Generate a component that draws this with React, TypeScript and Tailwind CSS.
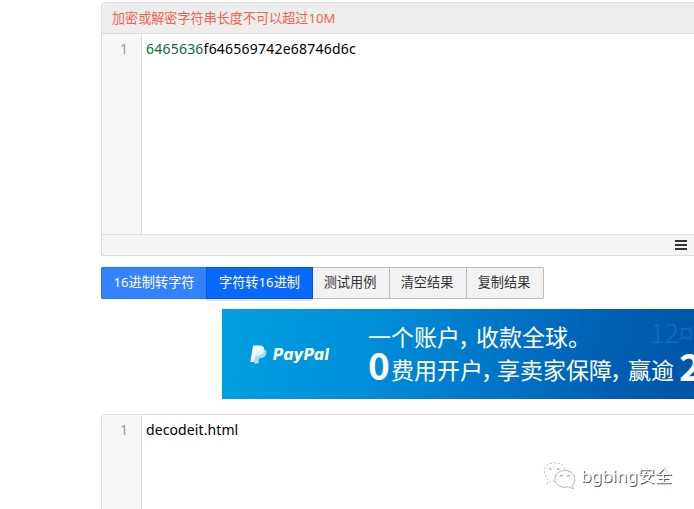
import type { ReactNode } from 'react';

const ui = "font-['Noto_Sans','Noto_Sans_CJK_SC',sans-serif]";
const cjk = "font-['Noto_Sans_CJK_SC',sans-serif]";

function Editor({ children, className }: { children: ReactNode; className: string }) {
  return (
    <div className={`flex bg-white ${className}`}>
      <div className="w-[40px] shrink-0 border-r border-[#ddd] bg-[#f7f7f7] pr-[13px] pt-[5px] text-right text-[14px] leading-[20px] text-[#999]">
        1
      </div>
      <div className="whitespace-nowrap pl-[4px] pt-[5px] text-[14px] leading-[20px] text-black">{children}</div>
    </div>
  );
}

function PlainButton({ children, className = '' }: { children: ReactNode; className?: string }) {
  return (
    <button className={`h-[32px] w-[77px] border-y border-r border-[#bcbcbc] bg-[#f2f2f2] pr-[2px] text-[13.2px] text-[#333] ${className}`}>
      {children}
    </button>
  );
}

function PayPalMark() {
  return (
    <svg className="h-[19px] w-[17px] shrink-0" viewBox="0 0 17 19">
      <path d="M6.2 4.2h7.2c2.7 0 3.5 2 2.9 4.4-.7 3.2-2.7 4.6-5.7 4.6H9.2l-.9 5.3H3.9z" fill="#a6dcf6" />
      <path d="M3.1.5h6.6c3.5 0 4.8 1.9 4.2 4.8-.7 3.4-3 5.1-6.4 5.1H5.3l-1.2 6.6H.3z" fill="#fff" />
      <path d="M6.4 4.4h5.1c1.2 0 2 .3 2.4.8-.5 3.6-2.9 5.2-6.4 5.2H5.4z" fill="#e2f4fd" />
    </svg>
  );
}

function Banner() {
  return (
    <div className={`relative ml-[121px] mt-[10px] flex h-[90px] w-[472px] overflow-hidden bg-[linear-gradient(97deg,#009fe1_0%,#008fda_31%,#0071c5_62%,#005db1_84%,#0055a7_100%)] text-white ${cjk}`}>
      <div className={`absolute left-[428px] top-[5px] whitespace-nowrap text-[27px] font-light leading-[36px] text-[#116db6] ${cjk}`}>12¤</div>
      <div className="flex h-full w-[146px] shrink-0 items-center gap-[6px] pl-[28px] pt-px">
        <PayPalMark />
        <span className="font-['Inter',sans-serif] text-[15.5px] font-extrabold italic leading-[20px] tracking-[0.5px]">PayPal</span>
      </div>
      <div className="relative whitespace-nowrap text-[23px] font-normal [font-feature-settings:'halt']">
        <div className="flex h-[42px] items-end leading-[30px]">
          <span className="w-[92px] shrink-0">一个账户</span>
          <span className="-ml-[2px] w-[18px] shrink-0">，</span>
          <span className="w-[92px] shrink-0">收款全球</span>
          <span>。</span>
        </div>
        <div className="flex h-[36px] items-center leading-[30px]">
          <span className="-mt-[9px] w-[23px] shrink-0 text-[37px] font-bold leading-[37px] tracking-[-1px]">0</span>
          <span className="w-[92px] shrink-0">费用开户</span>
          <span className="-ml-[2px] w-[16px] shrink-0">，</span>
          <span className="w-[115px] shrink-0">享卖家保障</span>
          <span className="-ml-[2px] w-[18px] shrink-0">，</span>
          <span className="w-[51px] shrink-0">赢逾</span>
          <span className="-mt-[9px] text-[38px] font-bold leading-[38px]">2</span>
        </div>
      </div>
    </div>
  );
}

function Watermark() {
  return (
    <div className="absolute left-[543px] top-[462px] flex items-center">
      <svg className="h-[28px] w-[38px]" viewBox="0 0 38 28" fill="none" stroke="#999" strokeWidth="0.7">
        <path d="M11.5 19.5l-3.2-.8-4.3 3 .8-5C-1 11 1 4 6 2.1c6.8-3.2 15.4-.3 16 5.9" strokeDasharray="2 2" />
        <path d="M22 8.4c-6 0-10 3.7-10 8.6s4.5 8.5 10 8.3l3.5-.6 4.7 2-.8-3.5c5-4.5 2-14.8-7.4-14.8z" />
        <path d="M6 7.5l1.3-1 1.2 1M14 7.5l1.3-1 1.2 1M17 14.5l1.3-1.5 1.3 1.5M24 14.5l1.3-1.5 1.3 1.5" stroke="#555" />
      </svg>
      <span className="whitespace-nowrap text-[17px] leading-[28px] text-white [text-shadow:1px_1px_0_#555]">bgbing安全</span>
    </div>
  );
}

export default function App() {
  return (
    <div className={`relative h-[509px] w-[694px] overflow-hidden bg-white pl-[101px] pt-[2px] ${ui}`}>
      <div className="w-[600px] rounded-tl-[4px] border border-[#ddd]">
        <div className="h-[31px] rounded-tl-[3px] border-b border-[#ddd] bg-[#ededed] pl-[10px] text-[13.1px] leading-[30px] text-[#f2634f]">
          加密或解密字符串长度不可以超过10M
        </div>
        <Editor className="h-[200px]">
          <span className="tracking-[0.22px]"><span className="text-[#116644]">6465636</span>f646569742e68746d6c</span>
        </Editor>
        <div className="flex h-[21px] items-center border-t border-[#ddd] bg-[#f5f5f5] pl-[573px]">
          <div className="flex w-[12px] flex-col gap-[2px]">
            <i className="h-[2px] bg-[#333]" />
            <i className="h-[2px] bg-[#333]" />
            <i className="h-[2px] bg-[#333]" />
          </div>
        </div>
      </div>
      <div className="mt-[11px] flex">
        <button className="h-[32px] w-[105px] rounded-l-[2px] border border-r-0 border-[#1a73ff] bg-[#3582ff] text-[13.2px] text-white">
          16进制转字符
        </button>
        <button className="relative h-[32px] w-[107px] border border-[#0056db] bg-[#0869ff] text-[13.2px] text-white shadow-[0_2px_0_#e6e6e6]">
          字符转16进制
        </button>
        <PlainButton>测试用例</PlainButton>
        <PlainButton>清空结果</PlainButton>
        <PlainButton className="rounded-r-[2px]">复制结果</PlainButton>
      </div>
      <Banner />
      <div className="mt-[15px] w-[600px] rounded-tl-[4px] border border-[#ddd]">
        <Editor className="h-[120px]"><span className="tracking-[0.1px]">decodeit.html</span></Editor>
      </div>
      <Watermark />
    </div>
  );
}
